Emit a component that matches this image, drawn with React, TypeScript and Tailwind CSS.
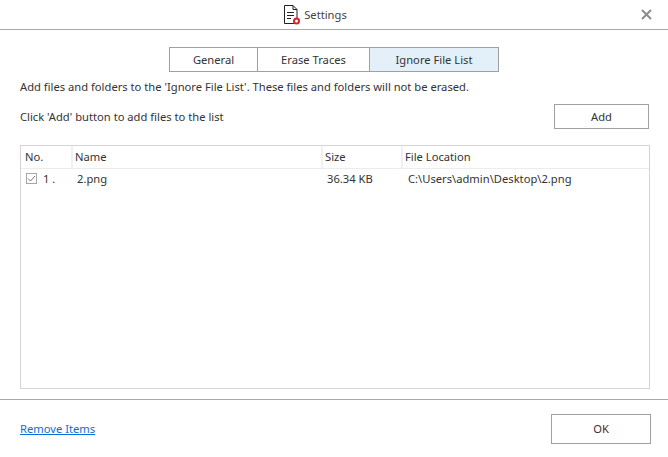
const font = "font-['Noto_Sans',sans-serif]";

function SettingsIcon() {
  return (
    <svg width="18" height="21" viewBox="0 0 18 21" fill="none" className="mr-[3px]">
      <path d="M1.500 1.500h8.500l4 4v14h-12.500z" stroke="#222" strokeWidth="1" />
      <path d="M10 1.500v4h4M4 8.500h7M4 11.500h7M4 14.500h4" stroke="#222" strokeWidth="1" />
      <circle cx="13.500" cy="17" r="3.500" fill="#d8232a" />
      <circle cx="13.500" cy="17" r="1.500" fill="#fff" />
    </svg>
  );
}

function Tab({ label, width, active }: { label: string; width: string; active?: boolean }) {
  return (
    <div
      className={`${width} flex h-[25px] items-center justify-center border border-[#a0a0a0] -ml-px first:ml-0 ${
        active ? "bg-[#e3f0fa]" : "bg-white"
      }`}
    >
      {label}
    </div>
  );
}

export default function App() {
  return (
    <div className={`${font} flex h-[457px] w-[668px] flex-col bg-white text-[11.2px] leading-[16px] text-[#333]`}>
      <div className="relative flex h-[30px] shrink-0 items-center justify-center border-b border-[#a8a8a8] pr-[38px]">
        <SettingsIcon />
        <span className="text-[#444]">Settings</span>
        <svg width="11" height="11" viewBox="0 0 11 11" className="absolute right-[16px] top-[9px]">
          <path d="M1 1l9 9M10 1l-9 9" stroke="#8c8c8c" strokeWidth="2" />
        </svg>
      </div>

      <div className="mt-[17px] flex pl-[169px]">
        <Tab label="General" width="w-[89px]" />
        <Tab label="Erase Traces" width="w-[113px]" />
        <Tab label="Ignore File List" width="w-[130px]" active />
      </div>

      <p className="mt-[7px] pl-[20px]">
        Add files and folders to the 'Ignore File List'. These files and folders will not be erased.
      </p>

      <div className="mt-[9px] flex items-center justify-between pl-[20px] pr-[19px]">
        <span>Click 'Add' button to add files to the list</span>
        <button className="h-[25px] w-[95px] border border-[#a0a0a0] bg-white">Add</button>
      </div>

      <div className="ml-[20px] mr-[18px] mt-[16px] h-[244px] border border-[#d4d4d4]">
        <div className="flex h-[23px] items-center border-b border-[#ececec]">
          <div className="flex h-full w-[52px] items-center border-r-2 border-[#f0f0f0] pl-[4px]">No.</div>
          <div className="flex h-full w-[250px] items-center border-r-2 border-[#f0f0f0] pl-[2px]">Name</div>
          <div className="flex h-full w-[80px] items-center border-r-2 border-[#f0f0f0] pl-[2px]">Size</div>
          <div className="flex h-full items-center pl-[2px]">File Location</div>
        </div>
        <div className="flex h-[19px] items-center">
          <div className="flex w-[52px] items-center pl-[5px]">
            <span className="flex h-[11px] w-[11px] items-center justify-center border border-[#a8a8a8]">
              <svg width="9" height="9" viewBox="0 0 9 9" fill="none">
                <path d="M1 4.500l2.500 2.500 4.500-5" stroke="#777" strokeWidth="1" />
              </svg>
            </span>
            <span className="ml-[6px]">1 .</span>
          </div>
          <div className="w-[250px] pl-[4px]">2.png</div>
          <div className="w-[80px] pl-[4px]">36.34 KB</div>
          <div className="pl-[5px]">C:\Users\admin\Desktop\2.png</div>
        </div>
      </div>

      <div className="mt-[10px] flex h-[58px] items-start justify-between border-t border-[#a8a8a8] pl-[20px] pr-[17px]">
        <a className="mt-[21px] text-[#0a6fd8] underline">Remove Items</a>
        <button className="mt-[14px] h-[30px] w-[100px] border border-[#a0a0a0] bg-white">OK</button>
      </div>
    </div>
  );
}
